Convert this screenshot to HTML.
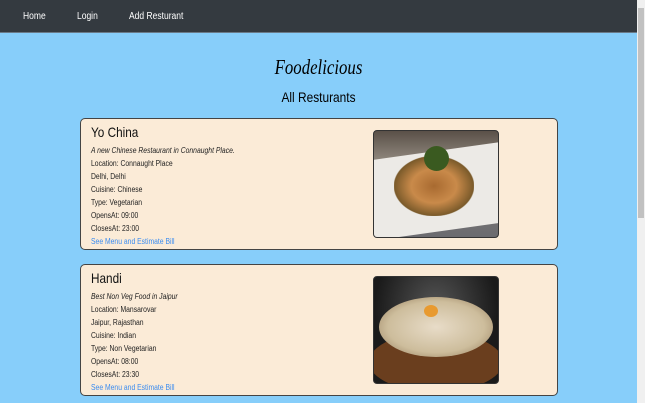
<!DOCTYPE html>
<html><head><style>
body{margin:0;width:645px;height:403px;overflow:hidden;background:#87cefa;font-family:"Liberation Sans",sans-serif;position:relative}
.nav{position:absolute;left:0;top:0;width:637px;height:32px;background:#343a40;border-bottom:1px solid #6a7a88}
.nav span{position:absolute;top:11px;color:#fff;font-size:10px;transform:scaleX(0.85);transform-origin:left}
.sb{position:absolute;right:0;top:0;width:8px;height:403px;background:#f0f0f0}
.sb div{position:absolute;left:1px;top:8px;width:6px;height:210px;background:#c1c1c1}
h1{position:absolute;top:55px;left:0;width:637px;text-align:center;margin:0;font-family:"Liberation Serif",serif;font-style:italic;font-weight:normal;font-size:21px;transform:scaleX(0.8)}
h2{position:absolute;top:89px;left:0;width:637px;text-align:center;margin:0;font-weight:normal;font-size:14px;transform:scaleX(0.85)}
.card{position:absolute;left:80px;width:476px;height:130px;background:#fbebd7;border:1px solid #444;border-radius:5px}
.t{position:absolute;left:10px;top:5px;font-size:14px;color:#111;transform:scaleX(0.84);transform-origin:left}
.l{position:absolute;left:10px;top:25px;font-size:8px;line-height:13px;color:#222;transform:scaleX(0.85);transform-origin:left;white-space:nowrap}
.l i{display:block}
.l a{color:#3b8cf0}
.img{position:absolute;left:292px;top:11px;width:124px;height:106px;border:1px solid #333;border-radius:4px;overflow:hidden}
</style></head><body>
<div class="nav"><span style="left:23px">Home</span><span style="left:77px">Login</span><span style="left:129px">Add Resturant</span></div>
<div class="sb"><div></div></div>
<h1>Foodelicious</h1>
<h2>All Resturants</h2>
<div class="card" style="top:118px">
<div class="t">Yo China</div>
<div class="l"><i>A new Chinese Restaurant in Connaught Place.</i>Location: Connaught Place<br>Delhi, Delhi<br>Cuisine: Chinese<br>Type: Vegetarian<br>OpensAt: 09:00<br>ClosesAt: 23:00<br><a>See Menu and Estimate Bill</a></div>
<div class="img" style="background:linear-gradient(180deg,#5a5048 0%,#8a8278 25%,#6b6b70 100%)">
<div style="position:absolute;left:-10px;top:20px;width:150px;height:80px;background:#eceae6;transform:rotate(-8deg);border-radius:6px"></div>
<div style="position:absolute;left:20px;top:25px;width:80px;height:60px;background:radial-gradient(ellipse,#a86a30 0%,#c98a4a 40%,#7a5a2a 70%,transparent 72%)"></div>
<div style="position:absolute;left:50px;top:15px;width:25px;height:25px;background:#3a5a20;border-radius:50%"></div>
</div></div>
<div class="card" style="top:264px">
<div class="t">Handi</div>
<div class="l"><i>Best Non Veg Food in Jaipur</i>Location: Mansarovar<br>Jaipur, Rajasthan<br>Cuisine: Indian<br>Type: Non Vegetarian<br>OpensAt: 08:00<br>ClosesAt: 23:30<br><a>See Menu and Estimate Bill</a></div>
<div class="img" style="background:radial-gradient(ellipse at 50% 30%,#555 0%,#1a1a1a 70%)">
<div style="position:absolute;left:-5px;top:55px;width:134px;height:60px;background:#6a3e1e;border-radius:50%"></div>
<div style="position:absolute;left:5px;top:20px;width:114px;height:60px;background:radial-gradient(ellipse,#e8dcc8 0%,#cdbd9c 60%,#8a7050 100%);border-radius:50%"></div>
<div style="position:absolute;left:50px;top:28px;width:14px;height:12px;background:#e89a30;border-radius:50%"></div>
</div></div>
</body></html>
